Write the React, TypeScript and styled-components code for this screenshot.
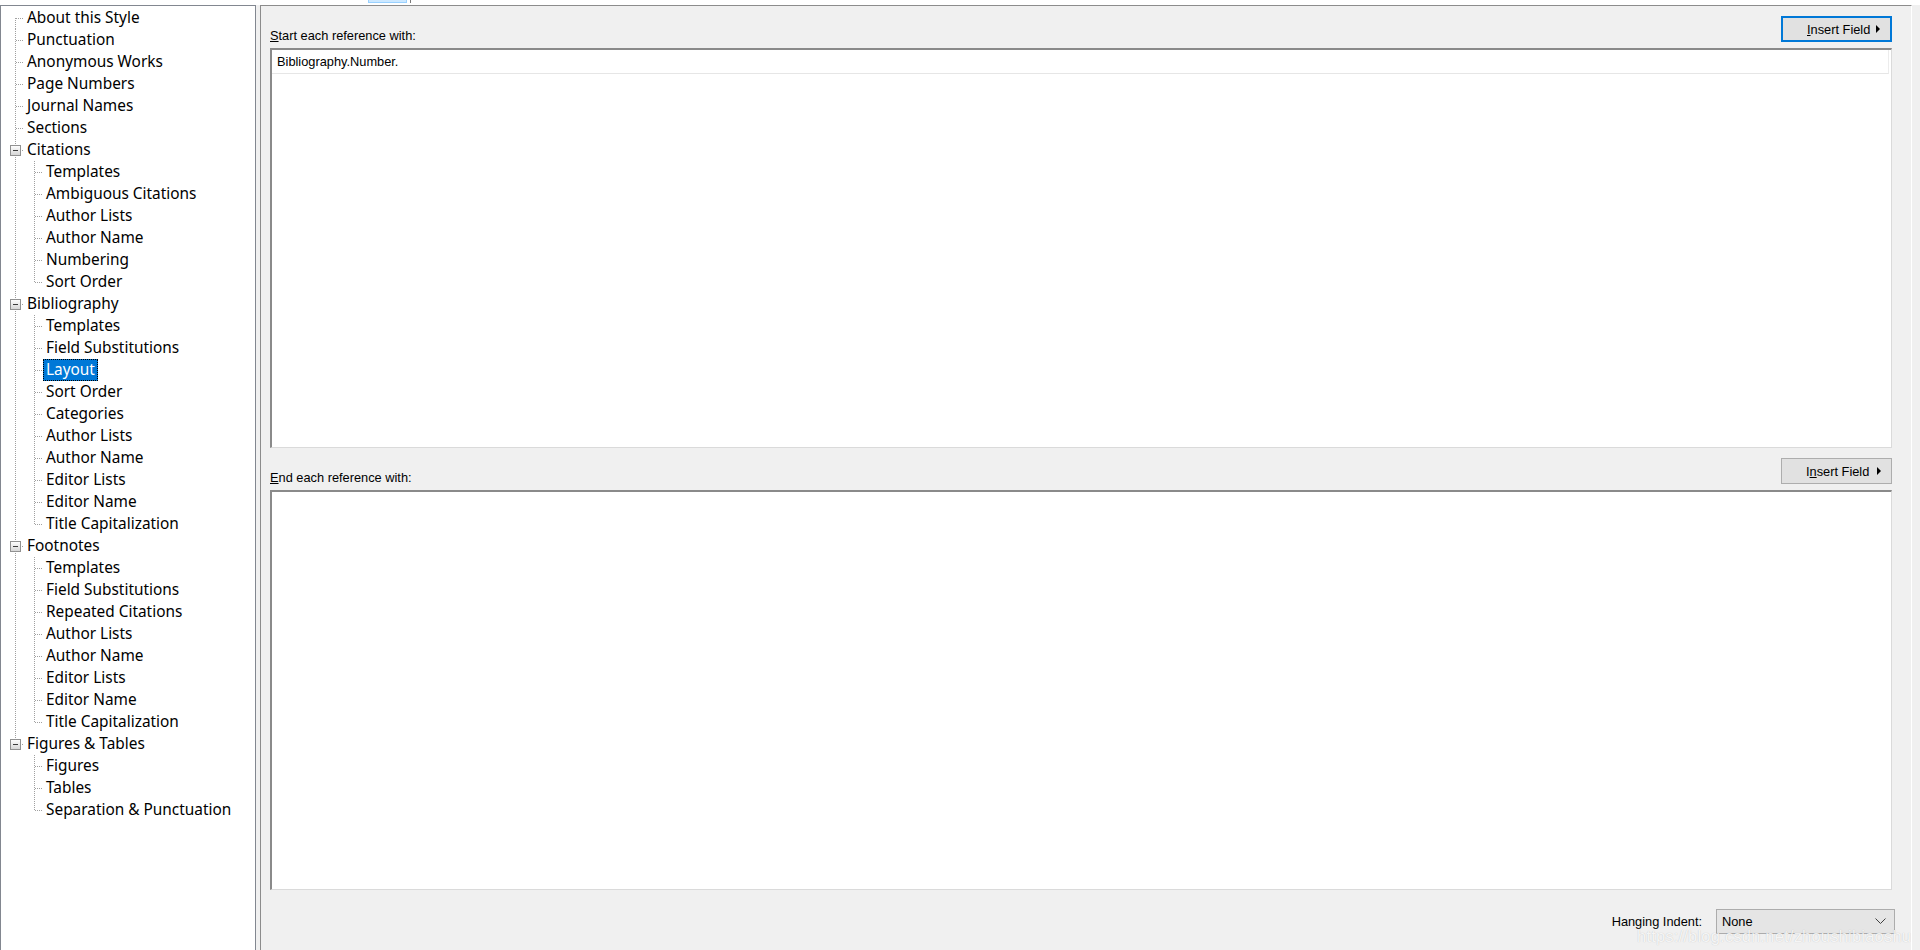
import React from 'react'
import styled, { createGlobalStyle } from 'styled-components'

/* ----------------------
   Global
---------------------- */

const GlobalStyle = createGlobalStyle`
  html, body {
    margin: 0;
    padding: 0;
    background: #f0f0f0;
  }
  * { box-sizing: border-box; }
`

/* ----------------------
   Data
---------------------- */

type Node = { label: string; children?: string[] }

const tree: Node[] = [
  { label: 'About this Style' },
  { label: 'Punctuation' },
  { label: 'Anonymous Works' },
  { label: 'Page Numbers' },
  { label: 'Journal Names' },
  { label: 'Sections' },
  {
    label: 'Citations',
    children: ['Templates', 'Ambiguous Citations', 'Author Lists', 'Author Name', 'Numbering', 'Sort Order'],
  },
  {
    label: 'Bibliography',
    children: [
      'Templates',
      'Field Substitutions',
      'Layout',
      'Sort Order',
      'Categories',
      'Author Lists',
      'Author Name',
      'Editor Lists',
      'Editor Name',
      'Title Capitalization',
    ],
  },
  {
    label: 'Footnotes',
    children: [
      'Templates',
      'Field Substitutions',
      'Repeated Citations',
      'Author Lists',
      'Author Name',
      'Editor Lists',
      'Editor Name',
      'Title Capitalization',
    ],
  },
  { label: 'Figures & Tables', children: ['Figures', 'Tables', 'Separation & Punctuation'] },
]

type Row = {
  key: string
  label: string
  level: number
  firstRoot: boolean
  lastRoot: boolean
  parentLast: boolean
  lastChild: boolean
  expandable: boolean
  selected: boolean
}

const rows: Row[] = []
tree.forEach((node, i) => {
  const lastRoot = i === tree.length - 1
  rows.push({
    key: node.label,
    label: node.label,
    level: 0,
    firstRoot: i === 0,
    lastRoot,
    parentLast: false,
    lastChild: false,
    expandable: !!node.children,
    selected: false,
  })
  node.children?.forEach((c, j) => {
    rows.push({
      key: node.label + '/' + c,
      label: c,
      level: 1,
      firstRoot: false,
      lastRoot: false,
      parentLast: lastRoot,
      lastChild: j === node.children!.length - 1,
      expandable: false,
      selected: node.label === 'Bibliography' && c === 'Layout',
    })
  })
})

/* ----------------------
   Layout
---------------------- */

const Screen = styled.div`
  position: relative;
  width: 1920px;
  height: 950px;
  display: flex;
  flex-direction: column;
  overflow: hidden;
  background: #f0f0f0;
`

const TopStrip = styled.div`
  height: 5px;
  background: #ffffff;
  display: flex;
  padding-left: 368px;
  gap: 3px;
`

const TabBit = styled.div`
  width: 39px;
  height: 3px;
  background: #cce8ff;
  border: 1px solid #99d1ff;
  border-top: none;
`

const TabTick = styled.div`
  width: 1px;
  height: 3px;
  background: #7a7a7a;
`

const Main = styled.div`
  flex: 1;
  display: flex;
  gap: 4px;
  min-height: 0;
`

/* ----------------------
   Tree
---------------------- */

const TreePanel = styled.div`
  width: 256px;
  background: #ffffff;
  border: 1px solid #828790;
  border-bottom: none;
  padding: 1px 0 0 4px;
  font-family: 'Noto Sans', 'Liberation Sans', sans-serif;
  font-size: 15.4px;
  color: #000;
`

const TreeRow = styled.div`
  display: flex;
  align-items: center;
  height: 22px;
`

const Cell = styled.svg`
  display: block;
  width: 19px;
  height: 22px;
  flex: none;
`

const Label = styled.span<{ $selected: boolean }>`
  line-height: 22px;
  height: 22px;
  padding: 0 3px;
  white-space: nowrap;
  background: ${({ $selected }) => ($selected ? '#0078d7' : 'transparent')};
  color: ${({ $selected }) => ($selected ? '#ffffff' : '#000000')};
  outline: ${({ $selected }) => ($selected ? '1px dotted #000' : 'none')};
  outline-offset: -1px;
`

const LINE = '#a0a0a0'

const RootCell: React.FC<{ row: Row }> = ({ row }) => (
  <Cell viewBox='0 0 19 22'>
    <line
      x1='10.5'
      x2='10.5'
      y1={row.firstRoot ? 11 : 0}
      y2={row.lastRoot ? 11 : 22}
      stroke={LINE}
      strokeDasharray='1 1'
      shapeRendering='crispEdges'
    />
    <line x1='11' x2='19' y1='11.5' y2='11.5' stroke={LINE} strokeDasharray='1 1' shapeRendering='crispEdges' />
    {row.expandable && (
      <g shapeRendering='crispEdges'>
        <defs>
          <linearGradient id='exp' x1='0' y1='0' x2='0' y2='1'>
            <stop offset='0' stopColor='#ffffff' />
            <stop offset='1' stopColor='#d4d4d4' />
          </linearGradient>
        </defs>
        <rect x='5.5' y='6.5' width='10' height='10' fill='url(#exp)' stroke='#919191' />
        <line x1='8' x2='13' y1='11.5' y2='11.5' stroke='#3c3c3c' />
      </g>
    )}
  </Cell>
)

const PassCell: React.FC<{ show: boolean }> = ({ show }) => (
  <Cell viewBox='0 0 19 22'>
    {show && (
      <line x1='10.5' x2='10.5' y1='0' y2='22' stroke={LINE} strokeDasharray='1 1' shapeRendering='crispEdges' />
    )}
  </Cell>
)

const ChildCell: React.FC<{ last: boolean }> = ({ last }) => (
  <Cell viewBox='0 0 19 22'>
    <line
      x1='10.5'
      x2='10.5'
      y1='0'
      y2={last ? 11 : 22}
      stroke={LINE}
      strokeDasharray='1 1'
      shapeRendering='crispEdges'
    />
    <line x1='11' x2='19' y1='11.5' y2='11.5' stroke={LINE} strokeDasharray='1 1' shapeRendering='crispEdges' />
  </Cell>
)

/* ----------------------
   Content panel
---------------------- */

const Content = styled.div`
  flex: 1;
  margin-right: 8px;
  background: #f0f0f0;
  border-left: 1px solid #8c8c8c;
  border-top: 1px solid #8c8c8c;
  border-right: 1px solid #ffffff;
  padding: 0 19px 0 9px;
  display: flex;
  flex-direction: column;
  font-family: 'Liberation Sans', Arial, sans-serif;
  font-size: 12.8px;
  color: #000;
`

const FieldHeader = styled.div<{ $top: number }>`
  display: flex;
  justify-content: space-between;
  align-items: flex-end;
  padding-top: ${({ $top }) => $top}px;
`

const FieldLabel = styled.div`
  line-height: 15px;
  margin-bottom: 5px;
`

const InsertButton = styled.button<{ $focused: boolean }>`
  width: 111px;
  height: 26px;
  margin-bottom: 6px;
  padding: 0 9px 0 24px;
  display: flex;
  align-items: center;
  justify-content: space-between;
  background: #e1e1e1;
  border: ${({ $focused }) => ($focused ? '2px solid #0078d7' : '1px solid #adadad')};
  font: inherit;
  color: #000;
`

const FieldBox = styled.div`
  height: 400px;
  background: #ffffff;
  border-top: 2px solid #8a8a8a;
  border-left: 2px solid #8a8a8a;
  border-right: 1px solid #dadada;
  border-bottom: 1px solid #dadada;
  display: flex;
  flex-direction: column;
`

const FieldLine = styled.div`
  height: 24px;
  line-height: 23px;
  padding-left: 5px;
  border-right: 1px solid #ececec;
  border-bottom: 1px solid #e6e6e6;
  margin-right: 2px;
`

const Footer = styled.div`
  display: flex;
  justify-content: flex-end;
  align-items: center;
  gap: 14px;
  padding-top: 19px;
  margin-right: -3px;
`

const SelectBox = styled.div`
  width: 179px;
  height: 25px;
  padding: 0 8px 0 5px;
  display: flex;
  align-items: center;
  justify-content: space-between;
  background: #e5e5e5;
  border: 1px solid #acacac;
`

const Watermark = styled.div`
  position: absolute;
  left: 1637px;
  top: 927px;
  line-height: 19px;
  font-family: 'Liberation Sans', Arial, sans-serif;
  font-size: 16.5px;
  letter-spacing: 0.2px;
  color: rgba(255, 255, 255, 0.85);
  text-shadow: 0 0 1px rgba(0, 0, 0, 0.22);
  white-space: nowrap;
  pointer-events: none;
`

const Arrow = () => (
  <svg width='5' height='8' viewBox='0 0 5 8'>
    <path d='M0 0 L4 4 L0 8 Z' fill='#000' />
  </svg>
)

const Chevron = () => (
  <svg width='11' height='7' viewBox='0 0 11 7'>
    <polyline points='0.5,0.5 5.5,5.5 10.5,0.5' fill='none' stroke='#404040' strokeWidth='1' />
  </svg>
)

/* ----------------------
   Component
---------------------- */

export default function App() {
  return (
    <>
      <GlobalStyle />
      <Screen>
        <TopStrip>
          <TabBit />
          <TabTick />
        </TopStrip>
        <Main>
          <TreePanel>
            {rows.map((row) => (
              <TreeRow key={row.key}>
                {row.level === 0 ? (
                  <RootCell row={row} />
                ) : (
                  <>
                    <PassCell show={!row.parentLast} />
                    <ChildCell last={row.lastChild} />
                  </>
                )}
                <Label $selected={row.selected}>{row.label}</Label>
              </TreeRow>
            ))}
          </TreePanel>

          <Content>
            <FieldHeader $top={10}>
              <FieldLabel>
                <u>S</u>tart each reference with:
              </FieldLabel>
              <InsertButton $focused>
                <span>
                  <u>I</u>nsert Field
                </span>
                <Arrow />
              </InsertButton>
            </FieldHeader>
            <FieldBox>
              <FieldLine>Bibliography.Number.</FieldLine>
            </FieldBox>

            <FieldHeader $top={10}>
              <FieldLabel>
                <u>E</u>nd each reference with:
              </FieldLabel>
              <InsertButton $focused={false}>
                <span>
                  I<u>n</u>sert Field
                </span>
                <Arrow />
              </InsertButton>
            </FieldHeader>
            <FieldBox />

            <Footer>
              <span>Hanging Indent:</span>
              <SelectBox>
                <span>None</span>
                <Chevron />
              </SelectBox>
            </Footer>
          </Content>
        </Main>
        <Watermark>https://blog.csdn.net/zhoushibiaoshu</Watermark>
      </Screen>
    </>
  )
}
